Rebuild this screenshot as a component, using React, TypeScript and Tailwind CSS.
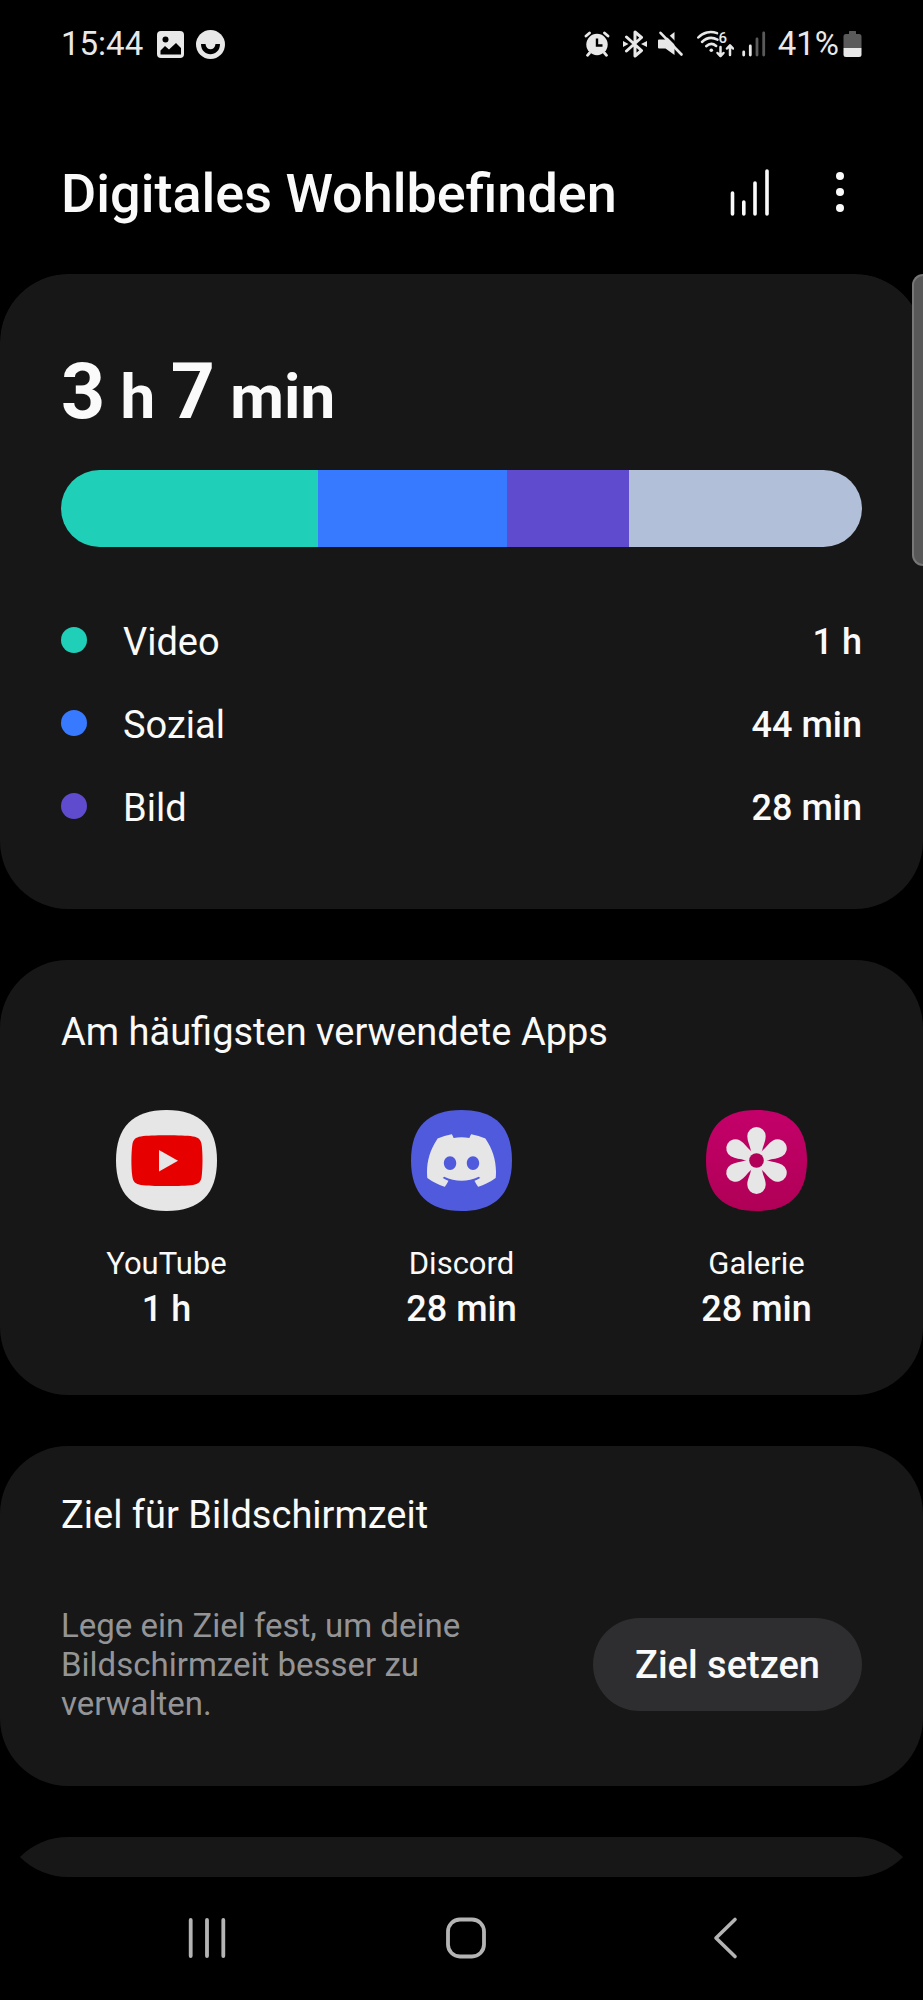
import type { ReactNode } from 'react';
import { SiDiscord } from 'react-icons/si';

interface Category {
  name: string;
  time: string;
  color: string;
}

interface AppUsage {
  name: string;
  time: string;
  icon: ReactNode;
}

const segments = [
  { color: 'bg-[#1fcfb8]', share: 257 },
  { color: 'bg-[#387aff]', share: 188 },
  { color: 'bg-[#5f4bcd]', share: 122 },
  { color: 'bg-[#b1bfd9]', share: 233 },
];

const categories: Category[] = [
  { name: 'Video', time: '1 h', color: 'bg-[#1fcfb8]' },
  { name: 'Sozial', time: '44 min', color: 'bg-[#387aff]' },
  { name: 'Bild', time: '28 min', color: 'bg-[#5f4bcd]' },
];

const SQUIRCLE = 'M50.5 0C84 0 101 17 101 50.5S84 101 50.5 101 0 84 0 50.5 17 0 50.5 0Z';

function YouTubeIcon() {
  return (
    <svg viewBox="0 0 101 101" className="size-[101px]" aria-hidden="true">
      <path d={SQUIRCLE} fill="#e6e6e6" />
      <path
        d="M50.5 25.3C62 25.3 71 25.6 77 26.4C82.5 27.2 85 29.5 85.7 35C86.8 44 86.8 57 85.7 66.3C85 72 82.5 74.2 77 75C71 75.8 62 76 50.5 76S31 75.8 25 75C19.5 74.2 17 72 16.3 66.3C15.1 57 15.1 44 16.3 35C17 29.5 19.5 27.2 25 26.4C31 25.6 39 25.3 50.5 25.3Z"
        fill="#e60000"
      />
      <path d="M43 40L62 50.7L43 61.5Z" fill="#e6e6e6" />
    </svg>
  );
}

function DiscordIcon() {
  return (
    <span className="relative flex size-[101px] items-center justify-center">
      <svg viewBox="0 0 101 101" className="absolute inset-0" aria-hidden="true">
        <path d={SQUIRCLE} fill="#505adc" />
      </svg>
      <SiDiscord className="relative size-[69px] text-[#e6e6e6]" aria-hidden="true" />
    </span>
  );
}

function GalleryIcon() {
  return (
    <svg viewBox="0 0 101 101" className="size-[101px]" aria-hidden="true">
      <defs>
        <linearGradient id="gallery" x1="0" y1="0" x2="0" y2="1">
          <stop offset="0" stopColor="#c4006a" />
          <stop offset="1" stopColor="#b00056" />
        </linearGradient>
      </defs>
      <path d={SQUIRCLE} fill="url(#gallery)" />
      <g transform="translate(50.5 50.5)" fill="#e6e6e6">
        {[0, 60, 120, 180, 240, 300].map((angle) => (
          <path
            key={angle}
            d="M-5.5 -9.5C-6.5 -15 -9.2 -19 -9.2 -24.3A9.2 9.2 0 0 1 9.2 -24.3C9.2 -19 6.5 -15 5.5 -9.5L0 0Z"
            transform={`rotate(${angle})`}
          />
        ))}
        <circle r="10.5" />
        <circle r="7.3" fill="#b20058" />
      </g>
    </svg>
  );
}

const apps: AppUsage[] = [
  { name: 'YouTube', time: '1 h', icon: <YouTubeIcon /> },
  { name: 'Discord', time: '28 min', icon: <DiscordIcon /> },
  { name: 'Galerie', time: '28 min', icon: <GalleryIcon /> },
];

function StatusBar() {
  return (
    <div className="flex h-[88px] items-center justify-between px-[61px] text-[33px] leading-10 text-[#e8e8e8]">
      <div className="flex items-center gap-3">
        <span className="mr-0.5">15:44</span>
        <svg viewBox="0 0 27 27" className="size-[27px]" aria-hidden="true">
          <rect width="27" height="27" rx="4" fill="#e8e8e8" />
          <circle cx="8.5" cy="8.5" r="3" fill="#000" />
          <path d="M3.5 23.5V19.5L8 15L12 18.5L19 12L24 17V23.5Z" fill="#000" />
        </svg>
        <svg viewBox="0 0 29 29" className="size-[29px]" aria-hidden="true">
          <circle cx="14.5" cy="14.5" r="14.5" fill="#e8e8e8" />
          <path d="M5 14H9.5C10 21 19 21 19.5 14H24C24 27.5 5 27.5 5 14Z" fill="#000" />
        </svg>
      </div>

      <div className="flex items-center">
        {/* Alarm */}
        <svg viewBox="0 0 26 26" className="mr-3 size-[26px]" aria-hidden="true">
          <g stroke="#e8e8e8" strokeWidth="2.8" strokeLinecap="round">
            <path d="M2 5L5.5 2M24 5L20.5 2M5.5 22L3.5 24.3M20.5 22L22.5 24.3" />
          </g>
          <circle cx="13" cy="13.5" r="10.7" fill="#e8e8e8" />
          <path d="M13 7.5V14.5H18.5" fill="none" stroke="#000" strokeWidth="2.4" />
        </svg>
        {/* Bluetooth */}
        <svg viewBox="0 0 26 28" className="mr-2 h-7 w-[26px]" aria-hidden="true">
          <path
            d="M4.5 7L19.5 20.5L13 26V2L19.5 7.5L4.5 21"
            fill="none"
            stroke="#e8e8e8"
            strokeWidth="3"
            strokeLinecap="round"
            strokeLinejoin="round"
          />
          <path d="M1 11L6.5 14L1 17ZM25 11L19 14L25 17Z" fill="#e8e8e8" />
        </svg>
        {/* Muted speaker */}
        <svg viewBox="0 0 28 28" className="mr-3 size-7" aria-hidden="true">
          <path d="M2 10.5Q2 9.5 3 9.5H9L18.5 2V25L9.5 18.5H3Q2 18.5 2 17.5Z" fill="#e8e8e8" />
          <path d="M6.5 0.5L28 22" stroke="#000" strokeWidth="3" />
          <path d="M4.5 2.8L25.5 24.5" stroke="#e8e8e8" strokeWidth="2.6" strokeLinecap="round" />
        </svg>
        {/* Wi-Fi 6 */}
        <svg viewBox="0 0 38 28" className="mr-2 h-7 w-[38px]" aria-hidden="true">
          <g fill="none" stroke="#e8e8e8" strokeWidth="2.5" strokeLinecap="round" strokeLinejoin="round">
            <path d="M2.3 7.5C7 2.2 14.5 0.7 21 3.2" />
            <path d="M6 12C10.5 7.7 16.5 7 21.5 9.6" />
            <path d="M10.2 16.2C13.3 13.4 17.2 13.4 20.2 16" />
            <path d="M24.5 17V26M21.5 23L24.5 26.2L27.5 23" />
            <path d="M34 25V15.5M31 18.5L34 15.3L37 18.5" />
          </g>
          <circle cx="15.3" cy="20.2" r="1.8" fill="#e8e8e8" />
          <text x="22.5" y="12.5" fontSize="15" fontWeight="500" fill="#e8e8e8">
            6
          </text>
        </svg>
        {/* Signal */}
        <svg viewBox="0 0 24 26" className="mr-3 h-[26px] w-6" aria-hidden="true">
          <g strokeWidth="2.8" strokeLinecap="round">
            <path d="M1.7 21V24M8.3 15V24" stroke="#e8e8e8" />
            <path d="M15 8V24M21.7 2V24" stroke="#5a5a5a" />
          </g>
        </svg>
        <span className="mr-1">41%</span>
        <svg viewBox="0 0 19 28" className="h-7 w-[19px]" aria-hidden="true">
          <path d="M6 1.5Q6 1 6.5 1H12.5Q13 1 13 1.5V4H16Q18.5 4 18.5 6.5V18H0.5V6.5Q0.5 4 3 4H6Z" fill="#5a5a5a" />
          <path d="M0.5 18H18.5V24.5Q18.5 27 16 27H3Q0.5 27 0.5 24.5Z" fill="#e8e8e8" />
        </svg>
      </div>
    </div>
  );
}

function Card({ className, children }: { className: string; children?: ReactNode }) {
  return <section className={`rounded-[68px] bg-neutral-900 ${className}`}>{children}</section>;
}

export default function App() {
  return (
    <div className="flex min-h-screen flex-col bg-black font-['Roboto',sans-serif] text-[#fafafa]">
      <StatusBar />

      <header className="flex h-[186px] items-center justify-between pl-[61px] pr-[59px] pt-[26px]">
        <h1 className="text-[54px] font-medium leading-[64px]">Digitales Wohlbefinden</h1>
        <div className="flex items-center gap-11">
          <button type="button" aria-label="Statistik">
            <svg viewBox="0 0 48 52" className="h-[52px] w-12" aria-hidden="true">
              <path
                d="M8.5 25V46M19.8 34V46M31 15V46M43 3V46"
                stroke="#fafafa"
                strokeWidth="3.6"
                strokeLinecap="round"
              />
            </svg>
          </button>
          <button type="button" aria-label="Weitere Optionen">
            <svg viewBox="0 0 48 52" className="h-[52px] w-12" aria-hidden="true">
              <g fill="#fafafa">
                <circle cx="24" cy="8" r="4" />
                <circle cx="24" cy="24" r="4" />
                <circle cx="24" cy="40" r="4" />
              </g>
            </svg>
          </button>
        </div>
      </header>

      <div className="relative">
        <main className="flex flex-col gap-[51px] overflow-hidden rounded-[68px]">
          <Card className="px-[61px] pb-[60px] pt-[78px]">
            <p className="text-[77px] font-bold leading-[80px]">
              3<span className="text-[62px] leading-none"> h </span>7
              <span className="text-[62px] leading-none"> min</span>
            </p>

            {/* Usage bar */}
            <div className="mt-[38px] flex h-[77px] overflow-hidden rounded-full">
              {segments.map((segment) => (
                <div key={segment.color} className={segment.color} style={{ flexGrow: segment.share }} />
              ))}
            </div>

            <ul className="mt-[53px]">
              {categories.map((category) => (
                <li key={category.name} className="flex h-[83px] items-center">
                  <span className={`mb-1 size-[26px] rounded-full ${category.color}`} />
                  <span className="ml-9 flex-1 text-[38px] leading-[48px]">{category.name}</span>
                  <span className="text-[36px] font-medium leading-[48px]">{category.time}</span>
                </li>
              ))}
            </ul>
          </Card>

          <Card className="px-[19px] pb-[62px] pt-[48px]">
            <h2 className="px-[42px] text-[38px] leading-[48px]">Am häufigsten verwendete Apps</h2>
            <ul className="mt-[54px] grid grid-cols-3">
              {apps.map((app) => (
                <li key={app.name} className="flex flex-col items-center">
                  {app.icon}
                  <span className="mt-8 text-[31px] leading-[42px]">{app.name}</span>
                  <span className="text-[36px] font-medium leading-[48px]">{app.time}</span>
                </li>
              ))}
            </ul>
          </Card>

          <Card className="px-[61px] pb-[63px] pt-[45px]">
            <h2 className="text-[38px] leading-[48px]">Ziel für Bildschirmzeit</h2>
            <div className="mt-[67px] flex items-center justify-between">
              <p className="max-w-[460px] text-[33px] leading-[39px] text-[#949496]">
                Lege ein Ziel fest, um deine Bildschirmzeit besser zu verwalten.
              </p>
              <button
                type="button"
                className="h-[93px] shrink-0 rounded-full bg-[#2e2e30] px-[42px] text-[38px] font-medium leading-[48px]"
              >
                Ziel setzen
              </button>
            </div>
          </Card>

          {/* Next card, cut off by the bottom of the scroll area */}
          <div className="h-10">
            <Card className="h-40" />
          </div>
        </main>

        {/* Scroll thumb */}
        <div className="absolute right-0 top-0 h-[292px] w-[11px] rounded-l-[11px] border-2 border-r-0 border-[#777777] bg-[#585858]" />
      </div>

      <nav className="grid h-[122px] grid-cols-3 items-center justify-items-center pl-[78px] pr-[69px]">
        <button type="button" aria-label="Letzte Apps">
          <svg viewBox="0 0 48 48" className="size-12" aria-hidden="true">
            <path d="M7.7 6V42M24 6V42M40.3 6V42" stroke="#b4b4b4" strokeWidth="3.8" strokeLinecap="round" />
          </svg>
        </button>
        <button type="button" aria-label="Startseite">
          <svg viewBox="0 0 48 48" className="size-12" aria-hidden="true">
            <rect x="6" y="5.5" width="36" height="37" rx="12" fill="none" stroke="#b4b4b4" strokeWidth="3.8" />
          </svg>
        </button>
        <button type="button" aria-label="Zurück">
          <svg viewBox="0 0 48 48" className="size-12" aria-hidden="true">
            <path
              d="M34 5.5L15 24L34 42.5"
              fill="none"
              stroke="#b4b4b4"
              strokeWidth="3.6"
              strokeLinecap="round"
              strokeLinejoin="round"
            />
          </svg>
        </button>
      </nav>
    </div>
  );
}
